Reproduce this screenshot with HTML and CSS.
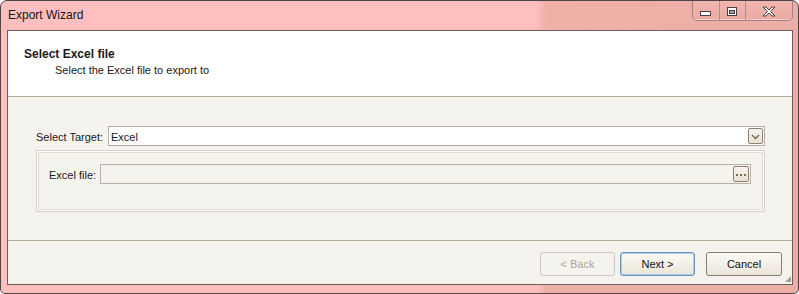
FILE: index.html
```html
<!DOCTYPE html>
<html lang="en">
<head>
    <meta charset="UTF-8">
    <title>Export Wizard</title>
    <link rel="stylesheet" href="styles.css">
</head>
<body>
    <div class="window">
        <!-- Title bar -->
        <div class="titlebar">
            <span class="title">Export Wizard</span>
            <div class="caption">
                <span class="cap-btn cap-min">
                    <svg width="12" height="6" viewBox="0 0 12 6"><rect x="0.5" y="0.5" width="10" height="4" fill="#fff" stroke="#4a3f45"/></svg>
                </span>
                <span class="cap-btn cap-max">
                    <svg width="11" height="10" viewBox="0 0 11 10"><rect x="0.5" y="0.5" width="9" height="8" fill="#fff" stroke="#4a3f45"/><rect x="2.5" y="3.5" width="5" height="3" fill="#b89a9a" stroke="#4a3f45"/></svg>
                </span>
                <span class="cap-btn cap-close">
                    <svg width="14" height="11" viewBox="0 0 14 11"><path d="M1 1 L4 1 L7 4 L10 1 L13 1 L8.5 5.5 L13 10 L10 10 L7 7 L4 10 L1 10 L5.5 5.5 Z" fill="#fff" stroke="#4a3f45" stroke-width="1" stroke-linejoin="round"/></svg>
                </span>
            </div>
        </div>

        <div class="client">
            <!-- Wizard page header -->
            <div class="header">
                <div class="header-title">Select Excel file</div>
                <div class="header-sub">Select the Excel file to export to</div>
            </div>

            <!-- Page content -->
            <div class="content">
                <div class="row">
                    <span class="target-label">Select Target:</span>
                    <div class="combo">
                        <span class="combo-text">Excel</span>
                        <span class="drop-btn">
                            <svg width="9" height="6" viewBox="0 0 9 6"><path d="M1 1 L4.5 4.5 L8 1" fill="none" stroke="#6f6258" stroke-width="1.3"/></svg>
                        </span>
                    </div>
                </div>
                <div class="group">
                    <div class="row">
                        <span class="file-label">Excel file:</span>
                        <div class="field">
                            <span class="dots-btn"><span class="dots"></span></span>
                        </div>
                    </div>
                </div>
            </div>

            <!-- Buttons -->
            <div class="footer">
                <button class="btn btn-disabled">&lt; Back</button>
                <button class="btn btn-default">Next &gt;</button>
                <button class="btn btn-cancel">Cancel</button>
                <span class="grip"></span>
            </div>
        </div>
    </div>
</body>
</html>
```

FILE: styles.css
```css
body {
    margin: 0;
    background: #ffffff;
    font-family: "Liberation Sans", Arial, sans-serif;
    font-size: 11px;
    color: #1a1a1a;
}
.window {
    width: 799px;
    height: 294px;
    box-sizing: border-box;
    border: 1px solid #4f4448;
    border-radius: 7px 7px 5px 5px;
    background: linear-gradient(90deg, #ffbfbf 0, #ffbfbf 535px, #efb0a8 545px, #ecaea6 100%);
    padding: 0 5px 7px 6px;
    overflow: hidden;
}
.titlebar {
    height: 29px;
    display: flex;
    align-items: flex-start;
    margin: 0 0 0 -6px;
    padding-left: 7px;
}
.title {
    font-size: 12px;
    line-height: 15px;
    padding-top: 7px;
    color: #151515;
}
.caption {
    margin-left: auto;
    display: flex;
    height: 19px;
    border: 1px solid #a88080;
    border-top: none;
    border-radius: 0 0 5px 5px;
    background: linear-gradient(#f2b7b0, #e9aaa3);
    box-shadow: inset 0 -1px 0 rgba(255, 255, 255, 0.4);
}
.cap-btn {
    display: flex;
    justify-content: center;
    align-items: center;
    border-right: 1px solid #b58c8a;
}
.cap-btn:last-child {
    border-right: none;
}
.cap-min {
    width: 27px;
    padding-top: 6px;
    box-sizing: border-box;
}
.cap-max {
    width: 26px;
    padding-top: 2px;
    box-sizing: border-box;
}
.cap-close {
    width: 46px;
    padding-top: 2px;
    box-sizing: border-box;
}
.client {
    border: 1px solid #6b5d5f;
    background: #f5f3ee;
}
.header {
    height: 65px;
    background: #ffffff;
    border-bottom: 1px solid #b9aa93;
    box-sizing: content-box;
    padding: 0 16px;
}
.header-title {
    font-size: 12px;
    font-weight: bold;
    line-height: 16px;
    padding-top: 15px;
}
.header-sub {
    line-height: 16px;
    padding-left: 31px;
}
.content {
    height: 143px;
    box-sizing: border-box;
    padding: 29px 27px 0 28px;
}
.row {
    display: flex;
    align-items: center;
}
.target-label {
    width: 72px;
    line-height: 14px;
    padding-top: 2px;
}
.combo {
    flex: 1;
    height: 20px;
    box-sizing: border-box;
    border: 1px solid #b8aea4;
    background: #ffffff;
    display: flex;
    align-items: center;
    padding: 0 1px 0 2px;
}
.combo-text {
    flex: 1;
    padding-top: 1px;
}
.drop-btn,
.dots-btn {
    width: 15px;
    height: 16px;
    box-sizing: border-box;
    border: 1px solid #8f7f72;
    border-radius: 2px;
    background: linear-gradient(#f7f4ee, #e8e1d3);
    display: flex;
    justify-content: center;
    align-items: center;
}
.drop-btn svg {
    margin-top: 1px;
}
.group {
    margin-top: 4px;
    height: 62px;
    box-sizing: border-box;
    border: 1px solid #d8d0c3;
    box-shadow: inset 0 0 0 1px #ffffff, inset 0 0 0 2px #e2dbd0;
    padding: 13px 13px 0 12px;
}
.file-label {
    width: 51px;
    padding-top: 1px;
}
.field {
    flex: 1;
    height: 20px;
    box-sizing: border-box;
    border: 1px solid #bab0a6;
    background: #f5f3ee;
    display: flex;
    justify-content: flex-end;
    align-items: center;
    padding-right: 1px;
}
.dots-btn {
    width: 16px;
}
.dots {
    width: 10px;
    height: 2px;
    margin-top: 1px;
    background: repeating-linear-gradient(90deg, #7c6b58 0 2px, transparent 2px 4px);
}
.footer {
    position: relative;
    height: 44px;
    box-sizing: border-box;
    border-top: 1px solid #b9aa93;
    padding: 11px 10px 0 0;
    display: flex;
    justify-content: flex-end;
    align-items: flex-start;
}
.btn {
    width: 75px;
    height: 24px;
    margin: 0 0 0 5px;
    padding: 0;
    border-radius: 3px;
    font-family: "Liberation Sans", Arial, sans-serif;
    font-size: 11px;
    color: #111111;
    background: linear-gradient(#fbfaf6, #ece6da);
    border: 1px solid #8d7a6a;
}
.btn-disabled {
    color: #aaa39b;
    border-color: #cfc8be;
    background: #f5f3ee;
}
.btn-default {
    border-color: #6d8fb8;
    box-shadow: inset 0 0 0 1px #a9d0f5;
    background: linear-gradient(#fbfaf5, #ebe5d8);
}
.btn-cancel {
    width: 76px;
    margin-left: 11px;
}
.grip {
    position: absolute;
    right: 1px;
    bottom: 2px;
    width: 6px;
    height: 6px;
    background:
        radial-gradient(circle, #a59c92 0.8px, transparent 1px) 0 0 / 2px 2px;
    clip-path: polygon(100% 0, 100% 100%, 0 100%);
}
```
